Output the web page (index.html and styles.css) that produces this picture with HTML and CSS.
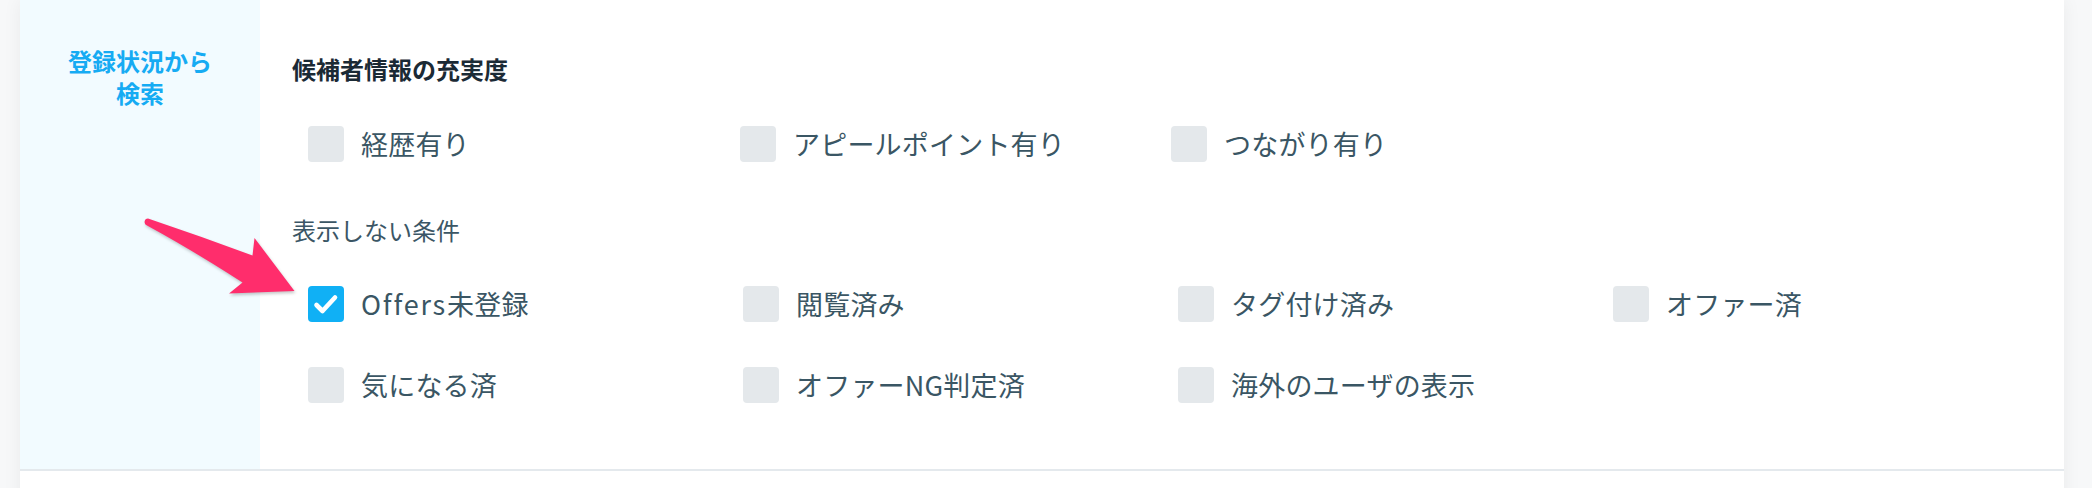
FILE: index.html
```html
<!DOCTYPE html>
<html lang="ja">
<head>
<meta charset="utf-8">
<link rel="stylesheet" href="styles.css">
</head>
<body>
<div class="stage">
  <div class="card">
    <div class="row">
      <div class="side">
        <div class="side-label">登録状況から<br>検索</div>
      </div>
      <div class="main">
        <div class="heading">候補者情報の充実度</div>
        <div class="grid grid-3">
          <label class="item"><span class="box"></span><span class="text">経歴有り</span></label>
          <label class="item"><span class="box"></span><span class="text">アピールポイント有り</span></label>
          <label class="item"><span class="box"></span><span class="text">つながり有り</span></label>
        </div>
        <div class="subheading">表示しない条件</div>
        <div class="grid grid-4">
          <label class="item"><span class="box checked"><svg viewBox="0 0 36 36" width="36" height="36"><polyline points="8.5,19 14.5,25 27,11.5" fill="none" stroke="#fff" stroke-width="4.6" stroke-linecap="round" stroke-linejoin="round"/></svg></span><span class="text"><span class="latin">Offers</span>未登録</span></label>
          <label class="item"><span class="box"></span><span class="text">閲覧済み</span></label>
          <label class="item"><span class="box"></span><span class="text">タグ付け済み</span></label>
          <label class="item"><span class="box"></span><span class="text">オファー済</span></label>
          <label class="item"><span class="box"></span><span class="text">気になる済</span></label>
          <label class="item"><span class="box"></span><span class="text">オファーNG判定済</span></label>
          <label class="item"><span class="box"></span><span class="text">海外のユーザの表示</span></label>
        </div>
      </div>
    </div>
    <div class="row-next"></div>
  </div>
  <svg class="arrow" width="2092" height="488" viewBox="0 0 2092 488">
    <path d="M148 218.5 Q200 236 252.5 255.5 L254.5 238 L294.5 291 L229 293.5 L242.5 282.5 Q192 250 147 225.5 A3.6 3.6 0 0 1 148 218.5 Z" fill="#ff2d6c"/>
  </svg>
</div>
</body>
</html>
```

FILE: styles.css
```css
html, body {
  margin: 0;
  padding: 0;
}

body {
  background: #f7f8f9;
  width: 2092px;
  height: 488px;
  overflow: hidden;
  font-family: "Noto Sans CJK JP", "Noto Sans", sans-serif;
}

.stage {
  position: relative;
  width: 2092px;
  height: 488px;
}

.card {
  margin-left: 20px;
  width: 2044px;
  background: #ffffff;
  box-shadow: 0 0 18px rgba(0, 0, 0, 0.06);
}

.row {
  display: flex;
  height: 469px;
  border-bottom: 2px solid #e4e9ed;
}

.side {
  width: 240px;
  flex: none;
  background: #f2fbff;
  padding-top: 45px;
  box-sizing: border-box;
}

.side-label {
  text-align: center;
  color: #16abf3;
  font-weight: 700;
  font-size: 24px;
  line-height: 32px;
}

.main {
  flex: 1;
  padding: 53px 0 0 32px;
  box-sizing: border-box;
}

.heading {
  font-size: 24px;
  line-height: 32px;
  font-weight: 700;
  color: #1b2a35;
}

.subheading {
  font-size: 24px;
  line-height: 32px;
  color: #3b5665;
  margin-top: 52px;
}

.grid {
  display: grid;
  padding-left: 16px;
  row-gap: 45px;
}

.grid-3 {
  grid-template-columns: 432px 431px 431px;
  margin-top: 41px;
}

.grid-4 {
  grid-template-columns: 435px 435px 435px 435px;
  margin-top: 40px;
}

.item {
  display: flex;
  align-items: center;
  height: 36px;
}

.box {
  width: 36px;
  height: 36px;
  flex: none;
  border-radius: 4px;
  background: #e4e8eb;
  display: block;
}

.box svg {
  display: block;
}

.box.checked {
  background: #10b0f5;
}

.text {
  margin-left: 17px;
  font-size: 27px;
  letter-spacing: 0.2px;
  line-height: 36px;
  color: #3a5664;
  white-space: nowrap;
}

.latin {
  letter-spacing: 1.8px;
}

.row-next {
  height: 40px;
  background: #ffffff;
}

.arrow {
  position: absolute;
  left: 0;
  top: 0;
  pointer-events: none;
  filter: drop-shadow(1px 2px 1.5px rgba(0, 0, 0, 0.22));
}
```
